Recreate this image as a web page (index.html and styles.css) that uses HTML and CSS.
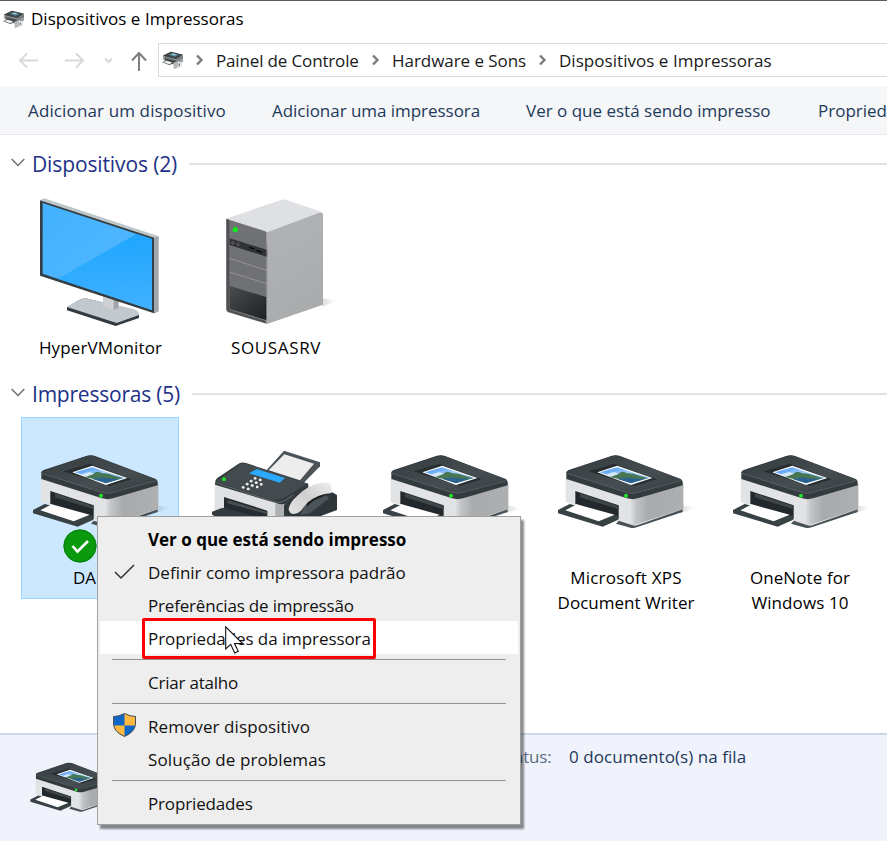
FILE: index.html
```html
<!DOCTYPE html>
<html lang="pt-BR">
<head>
<meta charset="utf-8">
<title>Dispositivos e Impressoras</title>
<link rel="stylesheet" href="styles.css">
</head>
<body>
<svg class="defs" width="0" height="0" aria-hidden="true">
  <defs>
    <linearGradient id="lid" x1="0" y1="0" x2="1" y2="1"><stop offset="0" stop-color="#343b3e"/><stop offset=".6" stop-color="#464e52"/><stop offset="1" stop-color="#353c3f"/></linearGradient>
    <linearGradient id="side" x1="0" x2="1"><stop offset="0" stop-color="#e2e3e5"/><stop offset=".12" stop-color="#c2c3c5"/><stop offset=".35" stop-color="#a9aaac"/><stop offset="1" stop-color="#aeafb1"/></linearGradient>
    <linearGradient id="sky" x1="0" y1="0" x2="1" y2="1"><stop offset="0" stop-color="#3d8df0"/><stop offset=".5" stop-color="#a9d4fa"/><stop offset="1" stop-color="#2d78b5"/></linearGradient>
    <linearGradient id="shade" x1="0" x2="1"><stop offset="0" stop-color="#777" stop-opacity=".25"/><stop offset="1" stop-color="#777" stop-opacity="0"/></linearGradient>
    <linearGradient id="screen" x1="0" y1="0" x2="1" y2="1"><stop offset="0" stop-color="#43b2ff"/><stop offset="1" stop-color="#55b8ff"/></linearGradient>
    <linearGradient id="screen2" x1=".7" y1="0" x2=".8" y2="1"><stop offset="0" stop-color="#1fa6ff"/><stop offset="1" stop-color="#41b1ff"/></linearGradient>
    <linearGradient id="tower" x1="0" y1="0" x2=".3" y2="1"><stop offset="0" stop-color="#d5d6d8"/><stop offset=".16" stop-color="#b1b2b4"/><stop offset="1" stop-color="#a9abac"/></linearGradient>
    <linearGradient id="bay" x1="0" y1="0" x2="1" y2="1"><stop offset="0" stop-color="#4a4c4e"/><stop offset="1" stop-color="#1d1f20"/></linearGradient>
    <linearGradient id="handset" x1="0" y1="1" x2="1" y2="0"><stop offset="0" stop-color="#e4e4e4"/><stop offset=".5" stop-color="#cfcfcf"/><stop offset="1" stop-color="#efefef"/></linearGradient>
  </defs>
  <symbol id="printer" viewBox="48 72 420 228">
    <path d="M425 225L468 234L420 250Z" fill="url(#shade)"/>
    <path d="M77 143L278 203L430 160V238L283 287L236 275V226L107 184V224L85 220L77 215Z" fill="#e2e3e5"/>
    <path d="M272 205L430 160V236L283 285L270 283Z" fill="url(#side)"/>
    <path d="M236 272L278 286Q285 288 293 285L428 238V246L290 292Q280 296 271 293L228 281Z" fill="#485257"/>
    <path d="M106 183L236 226V266L106 222Z" fill="#22282b"/>
    <path d="M120 190L236 228V238L120 202Z" fill="#3e4649"/>
    <path d="M54 240L89 222L235 258V269L188 290L54 250Z" fill="#384245"/>
    <path d="M76 241L110 223L224 254L176 274Z" fill="#fff"/>
    <path d="M79 127Q80 122 86 120L216 77Q227 74 238 77L420 146Q428 149 428 156V166L294 205Q278 210 261 205L79 147Z" fill="#343b3e"/>
    <path d="M80 126L216 78Q227 75 238 78L422 148Q428 151 418 155L290 189Q275 193 260 189L84 133Q77 130 80 126Z" fill="url(#lid)"/>
    <path d="M81 130L260 187Q276 192 290 188L424 152" fill="none" stroke="#5c6569" stroke-width="2"/>
    <path d="M145 124L224 101L350 148L284 168Z" fill="#272d30"/>
    <path d="M172 127L232 107L337 144L273 165Z" fill="#fff"/>
    <path d="M180 127L232 112L328 144L273 160Z" fill="url(#sky)"/>
    <path d="M207 141Q226 135 240 128Q248 122 262 130Q280 129 292 136L322 145L290 153L240 148Z" fill="#487554"/>
    <path d="M232 147L262 143L310 148L273 160Z" fill="#2b6390"/>
    <path d="M200 133L222 126L238 131L214 140Z" fill="#e6f2fa" opacity=".8"/>
    <circle cx="258" cy="197" r="6" fill="#22e52c"/>
  </symbol>
  <symbol id="mini-printer" viewBox="0 0 66 56">
    <path d="M3 13L27 2L63 11V31L47 41L13 31L3 24Z" fill="#9b9e9f"/>
    <path d="M3 13L27 2L63 11L43 24L9 16Z" fill="#3d4549"/>
    <path d="M20 11L30 6L50 11L39 17Z" fill="#52899e"/>
    <path d="M27 9L34 7L43 10L36 13Z" fill="#9fc4d3"/>
    <path d="M8 18L43 27V38L8 29Z" fill="#596063"/>
    <path d="M13 25L37 30V40L13 35Z" fill="#2f3436"/>
    <path d="M0 33L14 27L36 34L23 42Z" fill="#646b6d"/>
    <path d="M5 33L14 29L30 34L22 39Z" fill="#efefef"/>
    <path d="M32 38L46 31L56 36L43 44Z" fill="#dadddd"/>
    <path d="M35 35L48 31V49L35 54Z" fill="#b3b7b8"/>
    <path d="M48 31L59 34V47L47 52Z" fill="#e0e2e2"/>
    <path d="M50 38L54 37V44L50 45Z" fill="#747d78"/>
    <path d="M43 27L63 14V20L44 31Z" fill="#6e7578"/>
  </symbol>
</svg>

<div class="window">
  <header class="titlebar">
    <svg class="mini"><use href="#mini-printer"/></svg>
    <span class="t-title">Dispositivos e Impressoras</span>
  </header>

  <nav class="navbar">
    <svg class="nav-arrows" viewBox="0 0 158 34">
      <g fill="none" stroke="#d9d9d9" stroke-width="2"><path d="M38 17.500H20M27 10.500L20 17.500L27 24.500"/><path d="M65 17.500H83M76 10.500L83 17.500L76 24.500"/><path d="M105 15.500L108.500 19L112 15.500" stroke-width="2.200"/></g>
      <path d="M139 28V10M132 17.500L139 10L146 17.500" fill="none" stroke="#7d7d7d" stroke-width="2"/>
    </svg>
    <div class="address">
      <svg class="mini"><use href="#mini-printer"/></svg>
      <svg class="chev" viewBox="0 0 8 12"><path d="M1 1.500L5.500 6L1 10.500"/></svg>
      <span class="crumb c1">Painel de Controle</span>
      <svg class="chev" viewBox="0 0 8 12"><path d="M1 1.500L5.500 6L1 10.500"/></svg>
      <span class="crumb c2">Hardware e Sons</span>
      <svg class="chev" viewBox="0 0 8 12"><path d="M1 1.500L5.500 6L1 10.500"/></svg>
      <span class="crumb c3">Dispositivos e Impressoras</span>
    </div>
  </nav>

  <div class="commands">
    <span class="cmd k1">Adicionar um dispositivo</span>
    <span class="cmd k2">Adicionar uma impressora</span>
    <span class="cmd k3">Ver o que está sendo impresso</span>
    <span class="cmd k4">Propriedades</span>
  </div>

  <main class="content">
    <section>
      <h2 class="group"><svg class="fold" viewBox="0 0 14 9"><path d="M.7 1L7 7.500L13.300 1"/></svg><span class="g1">Dispositivos (2)</span></h2>
      <div class="tiles">
        <div class="tile">
          <div class="art">
            <svg class="monitor" viewBox="114 168 366 396">
              <path d="M201 502L238 480Q250 475 262 476L400 509Q418 515 417 527V534L347 558L201 511Z" fill="#333b40"/>
              <path d="M201 501L238 480Q250 475 262 476L400 507Q419 514 417 525L350 549Z" fill="#c1c9ce"/>
              <path d="M309 466L356 480V503L344 511L309 501Z" fill="#cfd0d4"/><path d="M341 475L356 480V503L341 511Z" fill="#a2a5aa"/>
              <path d="M120 181L133 175L474 288L460 296Z" fill="#bfc7cb"/>
              <path d="M460 294L476 288V514L462 521Z" fill="#9da7ac"/>
              <path d="M120 181L462 293V520L120 407Z" fill="#343f45"/>
              <path d="M128 189L456 297V510L128 401Z" fill="url(#screen)"/>
              <path d="M409 282L456 297V510L174 416Z" fill="url(#screen2)"/>
            </svg>
          </div>
          <div class="label l1">HyperVMonitor</div>
        </div>
        <div class="tile">
          <div class="art">
            <svg class="server" viewBox="72 51 336 387">
              <path d="M368 355L408 364L368 380Z" fill="url(#shade)"/>
              <path d="M78 116L245 59Q252 57 260 60L364 95L369 100V110L202 166L80 124Z" fill="#dfe0e3"/>
              <path d="M201 157L356 99Q369 94 369 106V374L201 432Z" fill="url(#tower)"/>
              <path d="M78 116L195 153Q202 155 202 163V432L84 397Q78 395 78 387Z" fill="#85878a"/>
              <path d="M80 116L89 121V389L198 423V430L87 396Q80 394 80 385Z" fill="#4f5153"/>
              <path d="M89 121L198 156V184L202 188V354L89 318Z" fill="#707175"/>
              <path d="M89 175L202 210V231L89 195Z" fill="#303234"/>
              <path d="M89 235L202 272M89 276L202 312" fill="none" stroke="#a3a4a7" stroke-width="2"/>
              <path d="M89 317L200 352V421L89 387Z" fill="url(#bay)"/>
              <circle cx="99" cy="189" r="4" fill="none" stroke="#777" stroke-width="2"/><circle cx="114" cy="193" r="4" fill="none" stroke="#777" stroke-width="2"/>
              <path d="M148 202L163 207M169 211L186 217" stroke="#08090a" stroke-width="4"/>
              <path d="M201 158V432" stroke="#c9cacc" stroke-width="2"/>
              <circle cx="106" cy="149" r="8" fill="#11e51b"/>
            </svg>
          </div>
          <div class="label l2">SOUSASRV</div>
        </div>
      </div>
    </section>

    <section>
      <h2 class="group"><svg class="fold" viewBox="0 0 14 9"><path d="M.7 1L7 7.500L13.300 1"/></svg><span class="g2">Impressoras (5)</span></h2>
      <div class="tiles">
        <div class="tile selected">
          <div class="art"><svg class="printer"><use href="#printer"/></svg>
            <svg class="badge" viewBox="0 0 34 34"><circle cx="17" cy="17" r="16.500" fill="#0b9a0e"/><circle cx="17" cy="17" r="16" fill="none" stroke="#087e0c"/><path d="M9.500 17L14.500 22.500L25 12" fill="none" stroke="#fff" stroke-width="2.600"/></svg>
          </div>
          <div class="label default-name">DA</div>
        </div>
        <div class="tile">
          <div class="art">
            <svg class="fax" viewBox="30 57 390 210">
              <path d="M44 162L250 218V267H44Z" fill="#e0e1e3"/><path d="M226 221L260 212V267H226Z" fill="#aeb0b2"/>
              <path d="M72 201L202 242V267H72Z" fill="#262c2f"/><path d="M83 210L202 247V252L83 220Z" fill="#485054"/>
              <path d="M36 245L68 233L180 262V267H60L36 254Z" fill="#343b3e"/>
              <path d="M197 124L252 62L360 97V109L310 160Z" fill="#4c5458"/><path d="M206 121L253 73L342 101L300 151Z" fill="#ededee"/>
              <path d="M46 154Q47 146 60 139L118 100Q127 96 138 99L325 161V180L262 219Q246 226 230 220L45 164Z" fill="#343b3e"/>
              <path d="M48 154L120 103Q128 98 138 101L322 161L250 205L220 211Z" fill="#434b4f"/>
              <path d="M48 158L225 216Q240 220 254 212L280 195" fill="none" stroke="#7a8285" stroke-width="2"/>
              <path d="M147 130L170 117L255 144L239 158Z" fill="#2ba9ff"/>
              <path d="M165 145L195 154M153 153L184 163M141 162L172 171M129 172L159 181" fill="none" stroke="#eee" stroke-width="8" stroke-linecap="round" stroke-dasharray="1 15"/>
              <path d="M252 225L316 174L395 186L411 195V240L340 266L252 258Z" fill="#30373a"/>
              <path d="M315 226L378 196L388 204L330 250L300 255Z" fill="#4b5458"/>
              <path d="M322 215L352 195L382 192L342 210L320 230Z" fill="#171b1d"/>
              <path d="M266 240Q266 220 292 197Q328 162 366 158Q390 156 395 171V189Q352 193 322 218L302 243Q288 256 272 250Z" fill="url(#handset)"/>
              <circle cx="72" cy="148" r="6" fill="#19e324"/>
            </svg>
          </div>
        </div>
        <div class="tile"><div class="art"><svg class="printer"><use href="#printer"/></svg></div></div>
        <div class="tile">
          <div class="art"><svg class="printer"><use href="#printer"/></svg></div>
          <div class="label l4"><span class="w1">Microsoft XPS</span><br><span class="w2">Document Writer</span></div>
        </div>
        <div class="tile">
          <div class="art"><svg class="printer"><use href="#printer"/></svg></div>
          <div class="label l5"><span class="w3">OneNote for</span><br><span class="w4">Windows 10</span></div>
        </div>
      </div>
    </section>
  </main>

  <footer class="details">
    <svg class="details-printer"><use href="#printer"/></svg>
    <span class="key">Status:</span>
    <span class="value">0 documento(s) na fila</span>
  </footer>

  <div class="menu">
    <div class="item bold"><span class="m1">Ver o que está sendo impresso</span></div>
    <div class="item"><svg class="mark" viewBox="0 0 24 24"><path d="M3 13L9 19L22 6" fill="none" stroke="#333" stroke-width="1.500"/></svg><span class="m2">Definir como impressora padrão</span></div>
    <div class="item"><span class="m3">Preferências de impressão</span></div>
    <div class="item hover"><span class="m4">Propriedades da impressora</span></div>
    <hr>
    <div class="item"><span class="m5">Criar atalho</span></div>
    <hr>
    <div class="item"><svg class="mark" viewBox="0 0 24 24"><path d="M12.500 .5Q18 3.500 23.500 3.500V11Q23 19 12.500 23.800Q2 19 1.500 11V3.500Q7 3.500 12.500 .5Z" fill="#0c68c8"/><path d="M12.500 .5Q18 3.500 23.500 3.500V12.500H12.500ZM12.500 12.500V23.800Q3 19 1.700 12.500Z" fill="#ffb940"/><path d="M12.500 .5Q18 3.500 23.500 3.500V11Q23 19 12.500 23.400Q2 19 1.500 11V3.500Q7 3.500 12.500 .5Z" fill="none" stroke="#4a4f55"/></svg><span class="m6">Remover dispositivo</span></div>
    <div class="item"><span class="m7">Solução de problemas</span></div>
    <hr>
    <div class="item"><span class="m8">Propriedades</span></div>
    <div class="callout"></div>
    <svg class="cursor" viewBox="0 0 19 28"><path d="M.7 .8V23L5.700 18.300L9.700 27L13.300 25.300L9.500 17.500H17.500Z" fill="#fff" stroke="#111" stroke-width="1.100"/></svg>
  </div>
</div>
</body>
</html>
```
FILE: styles.css
```css
* { box-sizing: border-box; }
body {
  margin: 0;
  background: #fff;
  color: #111;
  font: 17px/25px "Open Sans", "Noto Sans", sans-serif;
}
svg { display: block; flex: none; }
.defs { position: absolute; }
span { white-space: nowrap; }
.window {
  position: relative;
  display: flex;
  flex-direction: column;
  width: 887px;
  height: 841px;
  overflow: hidden;
  border-top: 1px solid #5c5c5c;
}
.titlebar { display: flex; align-items: center; height: 36px; padding-left: 3px; gap: 6px; color: #000; }
.t-title { letter-spacing: .04px; padding-bottom: 2px; }
.mini { width: 22px; height: 19px; }
.navbar { display: flex; height: 49px; padding-top: 6px; }
.nav-arrows { width: 158px; height: 34px; }
.address { display: flex; align-items: center; flex: 1; height: 34px; border: 1px solid #d9d9d9; border-right: 0; padding-left: 3px; }
.address .mini { margin-top: 1px; }
.chev { width: 8px; height: 12px; margin: 0 12px 0 13px; }
.mini + .chev { margin-left: 12px; }
.chev path { fill: none; stroke: #7b7b7b; stroke-width: 2.4; }
.crumb { flex: none; color: #1a1a1a; }
.c1 { width: 143px; letter-spacing: -.15px; }
.c2 { width: 134px; letter-spacing: -.05px; }
.c3 { letter-spacing: .04px; }
.commands { display: flex; align-items: center; flex: none; height: 49px; padding-left: 28px; background: #f4f6f8; border-bottom: 1px solid #e5e7eb; color: #1e395b; }
.cmd { flex: none; }
.k1 { width: 244px; letter-spacing: .13px; }
.k2 { width: 254px; letter-spacing: -.04px; }
.k3 { width: 292px; }
.content { flex: 1; padding-top: 14px; }
.group { display: flex; align-items: center; height: 30px; margin: 0; padding-left: 11px; font-size: 21px; line-height: 30px; font-weight: 400; color: #1e3287; letter-spacing: -.12px; }
.g2 { letter-spacing: -.22px; }
.group::after { content: ""; flex: 1; height: 2px; margin-left: 12px; background: #e2e2e2; }
.fold { width: 14px; height: 9px; margin-right: 7px; margin-top: -3px; }
.fold path { fill: none; stroke: #6d6d6d; stroke-width: 1.4; }
.tiles { display: flex; gap: 17px; padding: 8px 0 0 21px; height: 200px; }
.tile { flex: none; width: 158px; height: 182px; color: #000; text-align: center; }
.selected { background: #cce8ff; box-shadow: inset 0 0 0 1px #99d1ff; }
.art { position: relative; height: 148px; overflow: hidden; }
.monitor { width: 122px; height: 132px; margin: 9px 0 0 17px; }
.server { width: 112px; height: 129px; margin: 10px 0 0 28px; }
.printer { width: 140px; height: 76px; margin: 37px 0 0 10px; }
.fax { width: 130px; height: 70px; margin: 32px 0 0 14px; }
.badge { position: absolute; left: 42px; top: 112px; width: 34px; height: 34px; }
.l1 { letter-spacing: .12px; padding-left: 1px; }
.l2 { letter-spacing: .65px; padding-left: 2px; }
.l4 { padding-left: 2px; }
.w1 { letter-spacing: .2px; }
.l5 { letter-spacing: .1px; }
.default-name { text-align: left; padding-left: 52px; }
.details { display: flex; align-items: flex-start; flex: none; height: 108px; background: #f0f3fb; border-top: 2px solid #cbd9e8; color: #1e395b; line-height: 25px; padding-top: 9px; }
.details-printer { width: 94px; height: 51px; margin: 18px 0 0 29px; }
.key { width: 54px; margin-left: 376px; margin-right: 16px; color: #5b6b85; letter-spacing: -.2px; }
.value { letter-spacing: .06px; }
.menu { position: absolute; left: 97px; top: 515px; width: 424px; height: 309px; padding: 5px 2px; background: #eee; border: 1px solid #a0a0a0; box-shadow: 3px 4px 2px rgba(0, 0, 0, .45); }
.item { position: relative; height: 33px; padding: 1px 0 0 48px; line-height: 33px; color: #111; }
.bold { font-weight: 700; color: #000; }
.hover { background: #fff; }
.m3 { letter-spacing: -.19px; }
.m4 { letter-spacing: -.08px; }
.m5 { letter-spacing: -.22px; }
.m6 { letter-spacing: .09px; }
.m7 { letter-spacing: .1px; }
.m8 { letter-spacing: -.15px; }
.mark { position: absolute; left: 12px; top: 4px; width: 24px; height: 24px; }
.menu hr { height: 1px; margin: 5px 12px; border: 0; background: #919191; }
.callout { position: absolute; left: 44px; top: 101px; width: 234px; height: 41px; border: 3px solid #f00; border-radius: 2px; }
.cursor { position: absolute; left: 127px; top: 109px; width: 19px; height: 28px; }
```
